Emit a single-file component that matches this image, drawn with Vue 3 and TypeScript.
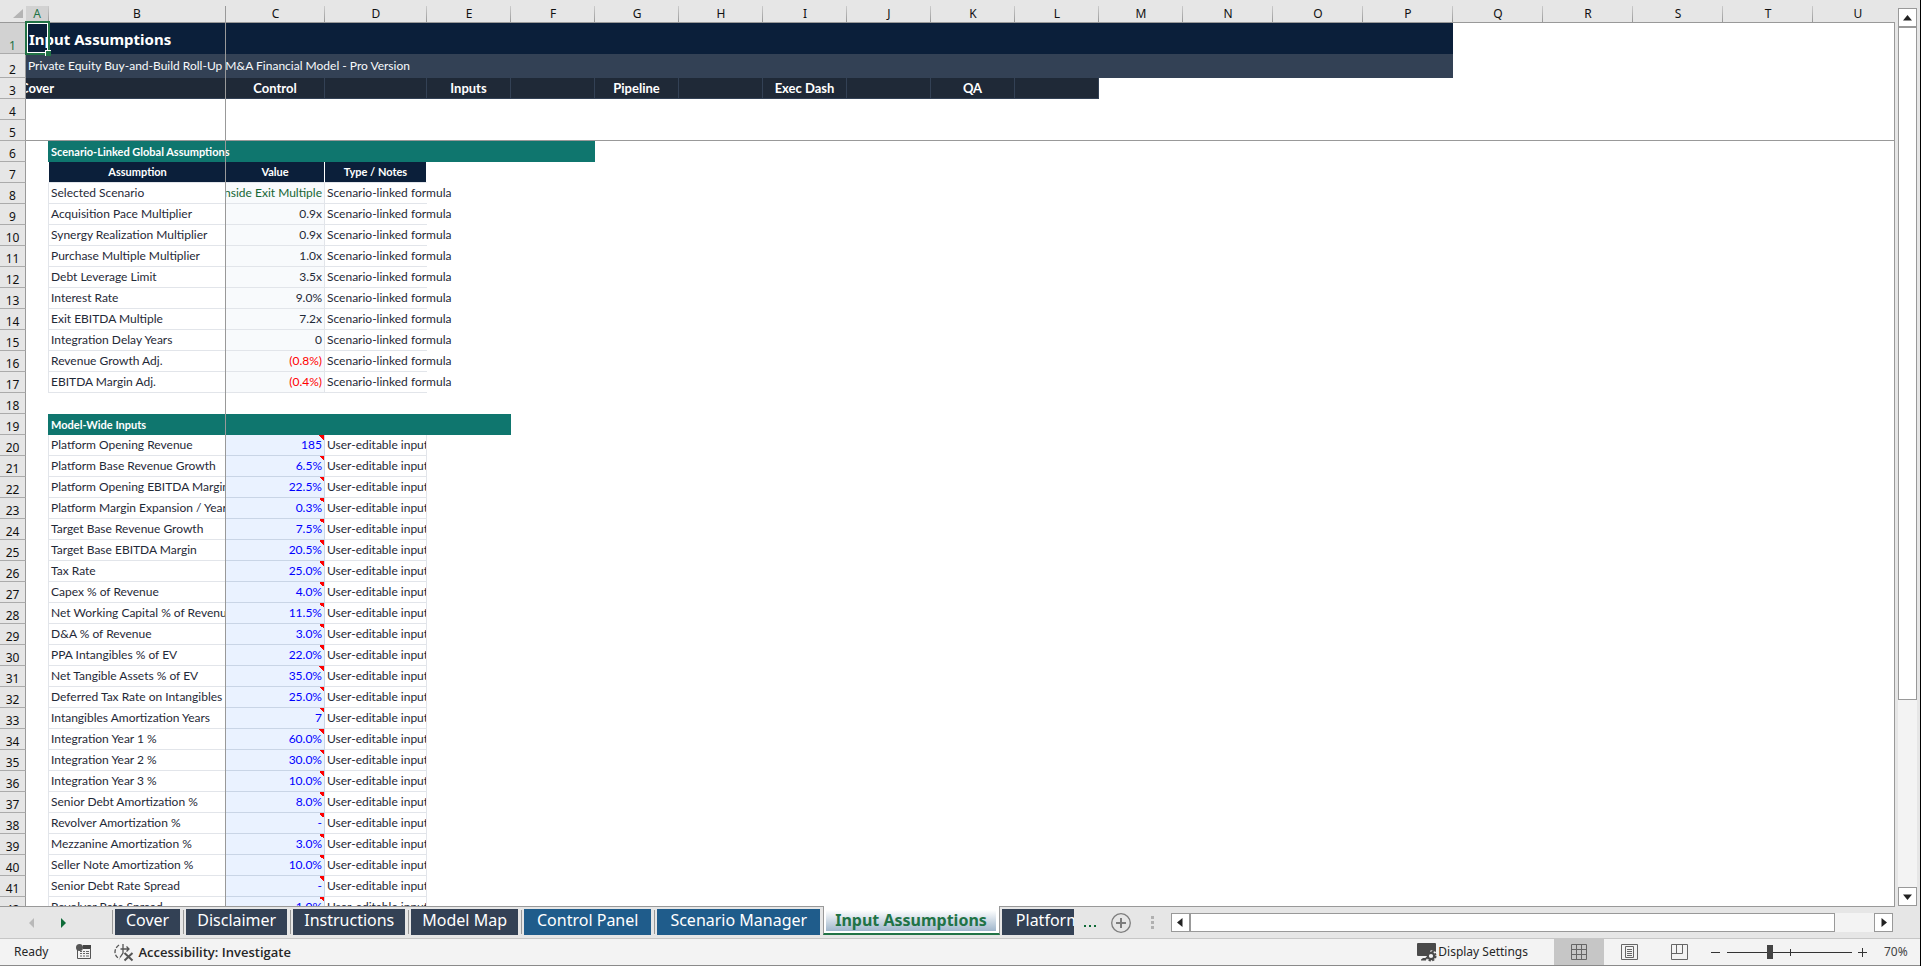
<script setup lang="ts">
import { ref } from 'vue'

interface Column { id: string; kind: string }
interface Line { row: number; label: string; value: string; tone: string }
interface SheetTab { name: string; tone: string }

const columns: Column[] = 'ABCDEFGHIJKLMNOPQRSTU'.split('').map((id) => ({
  id,
  kind: 'ABCD'.includes(id) ? `col-${id.toLowerCase()}` : id <= 'M' ? 'col-mid' : 'col-wide',
}))

const navCells = ['Control', '', 'Inputs', '', 'Pipeline', '', 'Exec Dash', '', 'QA', '']

const toLines = (start: number, items: [string, string, string?][], tone: string): Line[] =>
  items.map(([label, value, own], i) => ({ row: start + i, label, value, tone: own ?? tone }))

const scenario = toLines(8, [
  ['Selected Scenario', 'Downside Exit Multiple', 'link'],
  ['Acquisition Pace Multiplier', '0.9x'],
  ['Synergy Realization Multiplier', '0.9x'],
  ['Purchase Multiple Multiplier', '1.0x'],
  ['Debt Leverage Limit', '3.5x'],
  ['Interest Rate', '9.0%'],
  ['Exit EBITDA Multiple', '7.2x'],
  ['Integration Delay Years', '0'],
  ['Revenue Growth Adj.', '(0.8%)', 'negative'],
  ['EBITDA Margin Adj.', '(0.4%)', 'negative'],
], 'plain')

const inputs = toLines(20, [
  ['Platform Opening Revenue', '185'],
  ['Platform Base Revenue Growth', '6.5%'],
  ['Platform Opening EBITDA Margin', '22.5%'],
  ['Platform Margin Expansion / Year', '0.3%'],
  ['Target Base Revenue Growth', '7.5%'],
  ['Target Base EBITDA Margin', '20.5%'],
  ['Tax Rate', '25.0%'],
  ['Capex % of Revenue', '4.0%'],
  ['Net Working Capital % of Revenue', '11.5%'],
  ['D&A % of Revenue', '3.0%'],
  ['PPA Intangibles % of EV', '22.0%'],
  ['Net Tangible Assets % of EV', '35.0%'],
  ['Deferred Tax Rate on Intangibles', '25.0%'],
  ['Intangibles Amortization Years', '7'],
  ['Integration Year 1 %', '60.0%'],
  ['Integration Year 2 %', '30.0%'],
  ['Integration Year 3 %', '10.0%'],
  ['Senior Debt Amortization %', '8.0%'],
  ['Revolver Amortization %', '-'],
  ['Mezzanine Amortization %', '3.0%'],
  ['Seller Note Amortization %', '10.0%'],
  ['Senior Debt Rate Spread', '-'],
  ['Revolver Rate Spread', '1.0%'],
], 'input')

const tabs: SheetTab[] = [
  { name: 'Cover', tone: 'slate' },
  { name: 'Disclaimer', tone: 'slate' },
  { name: 'Instructions', tone: 'slate' },
  { name: 'Model Map', tone: 'slate' },
  { name: 'Control Panel', tone: 'blue' },
  { name: 'Scenario Manager', tone: 'blue' },
  { name: 'Input Assumptions', tone: 'active' },
  { name: 'Platform', tone: 'slate clipped' },
]

const zoom = ref(34)
</script>

<template>
  <div class="app">
    <div class="workspace">
      <main class="sheet">
        <table class="grid">
          <colgroup>
            <col class="col-head" />
            <col v-for="c in columns" :key="c.id" :class="c.kind" />
          </colgroup>
          <thead>
            <tr class="letters">
              <th class="corner">
                <svg width="10" height="9" viewBox="0 0 10 9"><path d="M10 0V9H0Z" fill="#b4b4b4" /></svg>
              </th>
              <th v-for="c in columns" :key="c.id" scope="col" :class="{ current: c.id === 'A', first: c.id === 'B' }">{{ c.id }}</th>
            </tr>
          </thead>
          <tbody>
            <tr class="row-title">
              <th scope="row" class="current">1</th>
              <td colspan="16" class="title">
                <span class="cursor"><i></i></span>Input Assumptions
              </td>
            </tr>
            <tr class="row-sub">
              <th scope="row">2</th>
              <td colspan="16" class="subtitle">Private Equity Buy-and-Build Roll-Up M&amp;A Financial Model - Pro Version</td>
            </tr>
            <tr>
              <th scope="row">3</th>
              <td class="nav nav-first"><div class="center"><a href="#cover">Cover</a></div></td>
              <td class="nav nav-first"></td>
              <td v-for="(n, i) in navCells" :key="i" class="nav">
                <a v-if="n" :href="'#' + n.toLowerCase().replace(' ', '-')">{{ n }}</a>
              </td>
            </tr>
            <tr><th scope="row">4</th></tr>
            <tr><th scope="row">5</th></tr>
            <tr>
              <th scope="row">6</th>
              <td></td>
              <td colspan="5" class="section">Scenario-Linked Global Assumptions</td>
            </tr>
            <tr>
              <th scope="row">7</th>
              <td></td>
              <td class="head head-first">Assumption</td>
              <td class="head">Value</td>
              <td class="head">Type / Notes</td>
            </tr>
            <tr v-for="l in scenario" :key="l.row">
              <th scope="row">{{ l.row }}</th>
              <td></td>
              <td class="label">{{ l.label }}</td>
              <td class="value" :class="l.tone"><div class="end">{{ l.value }}</div></td>
              <td class="note spill">Scenario-linked formula</td>
            </tr>
            <tr><th scope="row">18</th></tr>
            <tr>
              <th scope="row">19</th>
              <td></td>
              <td colspan="4" class="section">Model-Wide Inputs</td>
            </tr>
            <tr v-for="l in inputs" :key="l.row">
              <th scope="row">{{ l.row }}</th>
              <td></td>
              <td class="label">{{ l.label }}</td>
              <td class="value" :class="l.tone"><div class="end">{{ l.value }}</div></td>
              <td class="note">User-editable input</td>
            </tr>
          </tbody>
        </table>
        <div class="freeze-v"></div>
        <div class="freeze-h"></div>
      </main>

      <div class="vscroll">
        <button class="sq" aria-label="Scroll up"><svg width="9" height="6" viewBox="0 0 9 6"><path d="M4.500 0L9 5.500H0Z" /></svg></button>
        <div class="vtrack"><div class="vthumb"></div></div>
        <button class="sq" aria-label="Scroll down"><svg width="9" height="6" viewBox="0 0 9 6"><path d="M4.500 6L9 .5H0Z" /></svg></button>
      </div>
    </div>

    <nav class="tabbar">
      <div class="tabnav">
        <button aria-label="Previous sheets"><svg width="6" height="10" viewBox="0 0 6 10"><path d="M5 0V10L0 5Z" fill="#b9b9b9" /></svg></button>
        <button aria-label="Next sheets"><svg width="6" height="10" viewBox="0 0 6 10"><path d="M0 0V10L5 5Z" fill="#0e6b38" /></svg></button>
      </div>
      <div class="tabs">
        <div v-for="t in tabs" :key="t.name" class="slot" :class="t.tone">
          <button class="tab"><span>{{ t.name }}</span></button>
        </div>
      </div>
      <button class="more" aria-label="More sheets"><i></i><i></i><i></i></button>
      <button class="add" aria-label="New sheet">
        <svg width="20" height="20" viewBox="0 0 20 20" fill="none" stroke="#7d7d7d"><circle cx="10" cy="10" r="9.300" stroke-width="1.300" /><path d="M5 10H15M10 5V15" stroke-width="2" /></svg>
      </button>
      <div class="grip"><i></i><i></i><i></i></div>
      <div class="hscroll">
        <button class="sq" aria-label="Scroll left"><svg width="6" height="9" viewBox="0 0 6 9"><path d="M0 4.500L5.500 0V9Z" /></svg></button>
        <div class="htrack"><div class="hthumb"></div></div>
        <button class="sq" aria-label="Scroll right"><svg width="6" height="9" viewBox="0 0 6 9"><path d="M6 4.500L.5 0V9Z" /></svg></button>
      </div>
    </nav>

    <footer class="status">
      <span class="ready">Ready</span>
      <button class="macro" aria-label="Record macro">
        <svg width="16" height="16" viewBox="0 0 16 16">
          <path d="M7 1H15V5H7Z" fill="#444" /><circle cx="3.500" cy="3.500" r="3.500" fill="#555" />
          <path d="M1.500 6V14.500H14.500V4" fill="none" stroke="#555" />
          <path d="M4 7.500H6M7 7.500H9M10 7.500H13M4 9.500H6M7 9.500H9M10 9.500H13M4 12H6M7 12H9M10 12H13" stroke="#666" />
        </svg>
      </button>
      <button class="access">
        <svg width="21" height="19" viewBox="0 0 21 19" fill="none" stroke="#555" stroke-width="1.300">
          <path d="M5 2Q1 5 1 9T5.500 16" stroke-dasharray="4 1.500" />
          <path d="M9 1V6M6.500 6H15M12.500 3.500L15 6L12.500 8.500M9 6V10L6 14.500" />
          <path d="M10.500 10L18.500 17.500M18.500 10L10.500 17.500" stroke-width="2" />
        </svg>
        <span>Accessibility: Investigate</span>
      </button>
      <div class="right">
        <button class="display">
          <svg width="20" height="19" viewBox="0 0 20 19">
            <path d="M1 0H18Q19 0 19 1V9L14 7L10 13H1Q0 13 0 12V1Q0 0 1 0Z" fill="#4a4a4a" />
            <path d="M6 15H9V17.500H4V16.500Z" fill="#4a4a4a" />
            <circle cx="14" cy="13" r="3.200" fill="none" stroke="#4a4a4a" stroke-width="2.200" />
            <circle cx="14" cy="13" r="4.800" fill="none" stroke="#4a4a4a" stroke-width="1.500" stroke-dasharray="2.300 1.470" />
          </svg>
          <span>Display Settings</span>
        </button>
        <button class="view on" aria-label="Normal view">
          <svg width="16" height="16" viewBox="0 0 16 16" fill="none" stroke="#666"><path d="M.5 .5H15.500V15.500H.5ZM5.500 .5V15.500M10.500 .5V15.500M.5 5.500H15.500M.5 10.500H15.500" /></svg>
        </button>
        <button class="view" aria-label="Page layout">
          <svg width="17" height="16" viewBox="0 0 17 16" fill="none" stroke="#666"><path d="M.5 .5H16.500V15.500H.5ZM4.500 2.500H12.500V13.500H4.500ZM6 5.500H11M6 7.500H11M6 9.500H11M6 11.500H11" /></svg>
        </button>
        <button class="view" aria-label="Page break preview">
          <svg width="17" height="16" viewBox="0 0 17 16" fill="none" stroke="#666"><path d="M.5 .5H16.500V15.500H.5ZM5.500 .5V9.500M11.500 .5V9.500M.5 9.500H11.500" /></svg>
        </button>
        <button class="step" aria-label="Zoom out"><svg width="9" height="9" viewBox="0 0 9 9"><path d="M0 4.500H9" stroke="#333" /></svg></button>
        <div class="slider"><input v-model="zoom" type="range" min="0" max="100" aria-label="Zoom" /></div>
        <button class="step" aria-label="Zoom in"><svg width="9" height="9" viewBox="0 0 9 9"><path d="M0 4.500H9M4.500 0V9" stroke="#333" /></svg></button>
        <span class="percent">70%</span>
      </div>
    </footer>
  </div>
</template>

<style>
html, body { margin: 0; overflow: hidden; }
</style>

<style scoped>
.app {
  display: flex; flex-direction: column; box-sizing: border-box; height: 100vh; overflow: hidden;
  background: #e6e6e6; border-right: 1px solid #000; color: #262626;
  font: 12px/18px "Noto Sans", "Open Sans", sans-serif;
}
button { margin: 0; padding: 0; border: 0; background: none; font: inherit; color: inherit; display: flex; align-items: center; justify-content: center; }
svg { display: block; flex: none; }

.workspace { flex: 1; min-height: 0; display: flex; }
.sheet { position: relative; flex: 1; min-width: 0; overflow: hidden; border-bottom: 1px solid #999; background: linear-gradient(#e6e6e6 22px, #fff 22px); }
.sheet::after { content: ""; position: absolute; top: 22px; right: 0; bottom: 0; width: 1px; background: #999; }

.grid { width: 1903px; table-layout: fixed; border-collapse: separate; border-spacing: 0; }
.col-head { width: 26px; }
.col-a { width: 22px; }
.col-b { width: 178px; }
.col-c { width: 99px; }
.col-d { width: 102px; }
.col-mid { width: 84px; }
.col-wide { width: 90px; }

tr { height: 21px; }
.letters { height: 23px; }
.row-title { height: 31px; }
.row-sub { height: 24px; }
th, td { box-sizing: border-box; padding: 0; white-space: nowrap; }
thead th {
  position: relative; padding-top: 5px; border-bottom: 1px solid #999; background: #e6e6e6;
  font-weight: 400; line-height: 17px; color: #111;
}
thead th:not(.corner)::after, thead .first::before {
  content: ""; position: absolute; top: 6px; right: 0; bottom: 0; width: 1px; background: linear-gradient(#ccc, #999);
}
thead .first::before { right: auto; left: 0; }
thead .current::after { display: none; }
thead th.current { background: linear-gradient(#e6e6e6 6px, #d2d2d2 6px); color: #217346; }
.corner svg { margin: 0 3px 0 auto; }
tbody th {
  position: relative; z-index: 1;
  border-right: 1px solid #999; border-bottom: 1px solid #ababab; background: #e6e6e6;
  vertical-align: bottom; font-weight: 400; line-height: 14px; color: #111;
}
tbody th.current { background: #d2d2d2; color: #217346; }
td { font: 12px/18px Lato, "Noto Sans", sans-serif; color: #1f2937; }

.title { position: relative; padding-left: 3px; background: #0b1f3a; color: #fff; font: 700 15px/24px "Noto Sans", sans-serif; }
.cursor { position: absolute; left: -1px; top: -2px; box-sizing: border-box; width: 25px; height: 34px; border: 2px solid #217346; box-shadow: inset 0 0 0 1px #fff; z-index: 3; }
.cursor i { position: absolute; right: -3px; bottom: -3px; width: 5px; height: 5px; background: #217346; border-top: 1px solid #fff; border-left: 1px solid #fff; }
.subtitle { padding-left: 2px; background: #334155; color: #f8fafc; }
.nav { background: #1f2937; border-right: 1px solid #334155; border-bottom: 1px solid #334155; text-align: center; }
.nav-first { border-right: 0; }
.nav a { color: #fff; text-decoration: none; font-size: 13px; font-weight: 700; }
.center { display: flex; justify-content: center; }
.section { padding-left: 3px; background: #0f766e; color: #fff; font-size: 11px; font-weight: 700; line-height: 16px; }
.head { background: #0b1f3a; border-right: 1px solid #fff; border-bottom: 1px solid #e2e5ea; color: #fff; font-size: 11px; font-weight: 700; line-height: 16px; text-align: center; }
.head-first { border-left: 1px solid #fff; border-right: 0; }
.label, .note, .value { overflow: hidden; border-bottom: 1px solid #e2e5ea; }
.label { border-left: 1px solid #e2e5ea; padding-left: 2px; }
.note { border-right: 1px solid #e2e5ea; padding-left: 2px; }
.note.spill { overflow: visible; border-right: 0; }
.value { padding-right: 2px; border-right: 1px solid #e2e5ea; background: #f8fafc; }
.end { display: flex; justify-content: flex-end; }
.link { color: #166534; }
.negative { color: #f00; }
.input { background: linear-gradient(45deg, transparent 50%, #f00 50%) top right / 5px 5px no-repeat #eaf2ff; border-color: #c9d5e6; color: #00f; }
.freeze-v { position: absolute; left: 225px; top: 6px; bottom: 0; width: 1px; background: #999; }
.freeze-h { position: absolute; left: 0; right: 0; top: 140px; height: 1px; background: #999; }

.sq { box-sizing: border-box; flex: none; width: 19px; height: 19px; border: 1px solid #999; background: #fff; }
.sq path { fill: #222; }
.vscroll { display: flex; flex-direction: column; padding: 8px 3px 1px; }
.vtrack { flex: 1; background: #f3f3f3; }
.vthumb { box-sizing: border-box; height: 673px; max-height: 80%; border: 1px solid #999; background: #fff; }

.tabbar { display: flex; align-items: center; height: 31px; border-bottom: 1px solid #c6c6c6; }
.tabnav { display: flex; width: 112px; flex: none; }
.tabnav button { width: 32px; }
.tabnav button:first-child { margin-left: 16px; }
.tabs { display: flex; align-self: stretch; }
.slot { display: flex; padding: 2px 2px 0 3px; position: relative; }
.slot::before { content: ""; position: absolute; left: 0; top: 3px; width: 1px; height: 24px; background: #999; }
.slot + .slot { margin-left: 1px; }
.tab { height: 26px; padding: 0 11px; color: #fff; font-size: 16px; line-height: 22px; align-items: flex-start; }
.slate .tab { background: #334155; }
.blue .tab { padding: 0 13px; background: #1f5c8b; }
.slot.active { box-sizing: border-box; height: 29px; margin-top: -1px; padding: 4px 3px 4px 2px; background: #fff; border: solid #999; border-width: 0 1px; border-bottom: 2px solid #217346; }
.slot.active::before, .slot.clipped::before { display: none; }
.active .tab { height: 21px; padding: 0 9px; background: linear-gradient(#fff, #9fb6cc); color: #217346; font-weight: 700; line-height: 20px; }
.slot.clipped { margin-left: 0; padding-left: 2px; }
.clipped .tab { width: 72px; padding: 0 0 0 14px; overflow: hidden; justify-content: flex-start; }
.more { gap: 3px; margin-left: 8px; padding-top: 6px; }
.more i { width: 2px; height: 2px; background: #0e6b38; }
.add { margin-left: 15px; padding-top: 1px; }
.grip { display: flex; flex-direction: column; gap: 2px; margin: 0 17px 0 20px; }
.grip i { width: 3px; height: 3px; background: #b0b0b0; }
.hscroll { flex: 1; display: flex; margin-right: 27px; }
.htrack { flex: 1; padding-right: 39px; background: #f3f3f3; }
.hthumb { box-sizing: border-box; height: 19px; border: 1px solid #999; background: #fff; }

.status { display: flex; align-items: center; height: 26px; background: #f3f3f3; border-bottom: 1px solid #8a8a8a; }
.ready { margin-left: 14px; }
.macro { margin-left: 28px; }
.access { margin-left: 22px; gap: 3px; font-family: "Open Sans", sans-serif; font-size: 13px; font-weight: 600; }
.right { display: flex; align-items: center; align-self: stretch; margin-left: auto; }
.display { gap: 1px; margin-right: 26px; }
.view { width: 50px; align-self: stretch; }
.view.on { background: #c6c6c6; }
.step { width: 9px; }
.view + .step { margin-left: 7px; }
.slider { position: relative; display: flex; width: 125px; margin: 0 6px 0 7px; }
.slider::before { content: ""; position: absolute; left: 50%; top: 4px; width: 1px; height: 7px; background: #333; }
.slider input { appearance: none; width: 100%; height: 15px; margin: 0; background: linear-gradient(#333, #333) center / 100% 1px no-repeat; }
.slider input::-webkit-slider-thumb { appearance: none; width: 6px; height: 14px; background: #444; border: 0; }
.percent { width: 24px; margin: 0 12px 0 17px; color: #444; }
</style>
